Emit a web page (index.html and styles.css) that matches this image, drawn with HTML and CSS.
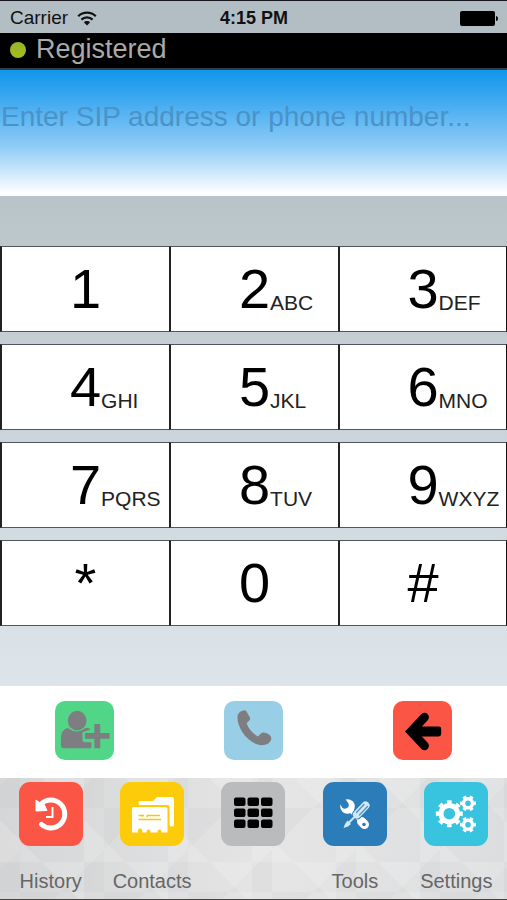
FILE: index.html
```html
<!DOCTYPE html>
<html lang="en">
<head>
<meta charset="utf-8">
<meta name="viewport" content="width=device-width, initial-scale=1">
<title>Dialer</title>
<link rel="stylesheet" href="styles.css">
</head>
<body>
<div class="phone">
  <header class="status-bar">
    <div class="carrier">
      <span>Carrier</span>
      <svg class="wifi" viewBox="0 0 20 15" aria-hidden="true">
        <path d="M1.2 5.200a12.600 12.600 0 0 1 17.600 0M4.400 8.600a8 8 0 0 1 11.200 0" fill="none" stroke="#111" stroke-width="2.200"/>
        <path d="M6.800 11.200a4.600 4.600 0 0 1 6.400 0L10 14.600z" fill="#111"/>
      </svg>
    </div>
    <span class="clock">4:15 PM</span>
    <svg class="battery" viewBox="0 0 38 15" aria-hidden="true">
      <rect width="35" height="15" rx="2"/>
      <path d="M36 5q2 0 2 2.500t-2 2.500z"/>
    </svg>
  </header>

  <div class="registration">
    <span class="led"></span>
    <span>Registered</span>
  </div>

  <main class="dialer">
    <input class="address" type="text" aria-label="SIP address or phone number" placeholder="Enter SIP address or phone number...">
    <div class="keypad">
      <button class="key"><span class="digit">1</span></button>
      <button class="key"><span class="digit">2</span><span class="letters">ABC</span></button>
      <button class="key"><span class="digit">3</span><span class="letters">DEF</span></button>
      <button class="key"><span class="digit">4</span><span class="letters">GHI</span></button>
      <button class="key"><span class="digit">5</span><span class="letters">JKL</span></button>
      <button class="key"><span class="digit">6</span><span class="letters">MNO</span></button>
      <button class="key"><span class="digit">7</span><span class="letters">PQRS</span></button>
      <button class="key"><span class="digit">8</span><span class="letters">TUV</span></button>
      <button class="key"><span class="digit">9</span><span class="letters">WXYZ</span></button>
      <button class="key"><span class="digit">*</span></button>
      <button class="key"><span class="digit">0</span></button>
      <button class="key"><span class="digit">#</span></button>
    </div>
    <div class="actions">
      <button class="action green" aria-label="Add contact">
        <svg viewBox="0 0 60 60" aria-hidden="true">
          <path fill="#7e7e82" d="M13 27.500q9 7 18 0q2 .5 4 2l-5 1.500q-3 1-2 3v6q0 2 3 2h6v6H9q-3 0-3-3v-6q0-10 7-11.500z"/>
          <ellipse cx="22.500" cy="20" rx="9.500" ry="10" fill="#7e7e82"/>
          <path d="M40 23.500h6v9h9.500v6H46V48h-6v-9.500h-9.500v-6H40z" fill="#7e7e82"/>
          <path d="M29 30q4-3 6.500-1" fill="none" stroke="#7e7e82" stroke-width="1.500"/>
        </svg>
      </button>
      <button class="action sky" aria-label="Call">
        <svg viewBox="0 0 60 60" aria-hidden="true">
          <path fill="#7e7e82" d="M14 14q2-4 7-4.500 1 0 2 1.500l3.500 6q.5 1.500-1 3l-2.500 2.500q3 8.500 11.500 13.500l3-3q2-1.500 5-.5 4.500 1.500 5.500 4.500.5 4-3.500 6.500-5 2.500-11 .5-9-3.500-15-12.500-6-10-4.500-17.500z"/>
        </svg>
      </button>
      <button class="action red" aria-label="Erase">
        <svg viewBox="0 0 60 60" aria-hidden="true">
          <path d="M32 16.500L18.500 31 32 45.500M20 31h15" fill="none" stroke="#000" stroke-width="9" stroke-linecap="round"/>
          <path d="M12.500 31L24 19l6 12-6 12z"/>
          <rect x="24" y="26" width="25" height="10" rx="2.500"/>
        </svg>
      </button>
    </div>
  </main>

  <nav class="tabs" aria-label="Sections">
    <a class="tab" href="#history">
      <svg class="tile red" viewBox="0 0 64 64" aria-hidden="true">
        <path d="M22.500 42.500A14 14 0 1 0 22 22" fill="none" stroke="#fff" stroke-width="5" stroke-linecap="round"/>
        <path d="M17 18l4 3 3-1 4 8.500-11 .5z" fill="#fff" stroke="#fff" stroke-linejoin="round"/>
        <path d="M33.500 25v10H27" fill="none" stroke="#fff" stroke-width="2"/>
      </svg>
      <span>History</span>
    </a>
    <a class="tab" href="#contacts">
      <svg class="tile yellow" viewBox="0 0 64 64" aria-hidden="true">
        <path fill="#fff" d="M20 19h13l3.500-3.500q.5-.5 1.500-.5h14q2 0 2 2v26q0 1.500-2 1.500t-2.500-1.500V25q0-2-2-2H20q-1.500 0-1.500-2t1.500-2z"/>
        <path fill="#fff" d="M13.500 25H45q2.500 0 2.500 2v23.500h-6q0-3-2-3t-2 3h-7q0-3-2-3t-2 3h-4q0-4-2.500-4t-2 4H12V27q0-2 1.500-2z"/>
        <path d="M18.500 33.500H24m2.500 0H40m-21.500 4H41" stroke="#f6c90e" stroke-width="1.500"/>
        <path d="M21 32.500l3 1-2 1.500zM28 32.500v2.500h-2z" fill="#f6c90e"/>
      </svg>
      <span>Contacts</span>
    </a>
    <a class="tab" href="#keypad" aria-label="Keypad" aria-current="page">
      <svg class="tile grey" viewBox="0 0 64 64" aria-hidden="true">
        <rect x="13" y="15.500" width="11.500" height="8.500" rx="2"/><rect x="26.500" y="15.500" width="11.500" height="8.500" rx="2"/><rect x="40" y="15.500" width="11.500" height="8.500" rx="2"/>
        <rect x="13" y="26.500" width="11.500" height="8.500" rx="2"/><rect x="26.500" y="26.500" width="11.500" height="8.500" rx="2"/><rect x="40" y="26.500" width="11.500" height="8.500" rx="2"/>
        <rect x="13" y="37.500" width="11.500" height="8.500" rx="2"/><rect x="26.500" y="37.500" width="11.500" height="8.500" rx="2"/><rect x="40" y="37.500" width="11.500" height="8.500" rx="2"/>
      </svg>
    </a>
    <a class="tab" href="#tools">
      <svg class="tile blue" viewBox="0 0 64 64" aria-hidden="true">
        <circle cx="24.500" cy="24.500" r="7.300" fill="#fff"/>
        <path d="M15 19l6-4 4.500 6.500q1 3-1.500 4.500t-4.500 0z" fill="#2a7db8"/>
        <path d="M28 28l13 14" stroke="#fff" stroke-width="5"/>
        <path d="M38.500 39.500l3 3" stroke="#fff" stroke-width="9" stroke-linecap="round"/>
        <circle cx="41" cy="42.500" r="1.800" fill="#2a7db8"/>
        <path d="M34 32.500L42.500 23.500" stroke="#2a7db8" stroke-width="10" stroke-linecap="round"/>
        <path d="M34 32.500L42.500 23.500" stroke="#d3e7f5" stroke-width="8" stroke-linecap="round"/>
        <path d="M33.500 30.500l7.500-8M36.500 33l8-8.500" stroke="#4b93c5" stroke-width="1.200" stroke-linecap="round"/>
        <path d="M32.500 34L25 41.500" stroke="#d3e7f5" stroke-width="2"/>
        <path d="M24.500 38.500l3.500 3.500-3 2.500-4.500 1.500 1.500-4z" fill="#d3e7f5"/>
      </svg>
      <span>Tools</span>
    </a>
    <a class="tab" href="#settings">
      <svg class="tile cyan" viewBox="0 0 64 64" aria-hidden="true">
        <g fill="none" stroke="#fff">
          <circle cx="25.300" cy="31.700" r="8.300" stroke-width="5"/>
          <circle cx="25.300" cy="31.700" r="11.700" stroke-width="3.600" pathLength="16" stroke-dasharray="1 1" stroke-dashoffset="0.500"/>
          <circle cx="44" cy="21.300" r="4.500" stroke-width="3.400"/>
          <circle cx="44" cy="21.300" r="6.600" stroke-width="2.800" pathLength="12" stroke-dasharray="1 1" stroke-dashoffset="0.500"/>
          <circle cx="44" cy="42.700" r="4.500" stroke-width="3.400"/>
          <circle cx="44" cy="42.700" r="6.600" stroke-width="2.800" pathLength="12" stroke-dasharray="1 1" stroke-dashoffset="0.500"/>
        </g>
      </svg>
      <span>Settings</span>
    </a>
  </nav>
</div>
</body>
</html>
```

FILE: styles.css
```css
* { box-sizing: border-box; }

body {
  margin: 0;
  font-family: "Liberation Sans", Arial, sans-serif;
}

button { font: inherit; padding: 0; cursor: pointer; }
svg { display: block; }

.phone {
  display: flex;
  flex-direction: column;
  min-height: 100vh;
  border-top: 1px solid #16161f;
  border-bottom: 1px solid #444;
}

.status-bar {
  display: grid;
  grid-template-columns: 1fr auto 1fr;
  align-items: center;
  height: 32px;
  padding: 2px 9px 0 10px;
  background: #b3bec4;
  color: #111;
  font-size: 19px;
}
.carrier { display: flex; align-items: center; gap: 9px; }
.wifi { width: 20px; height: 15px; }
.clock { font-size: 18px; font-weight: bold; }
.battery { width: 38px; height: 15px; justify-self: end; }

.registration {
  display: flex;
  align-items: center;
  gap: 10px;
  height: 37px;
  padding: 0 10px 2px;
  border-bottom: 2px solid #333d45;
  background: #000;
  color: #aaa;
  font-size: 27px;
}
.led {
  width: 16px;
  height: 16px;
  border-radius: 50%;
  background: linear-gradient(#93b62a, #a5bd20);
}

.dialer {
  flex: 1;
  display: flex;
  flex-direction: column;
  background: linear-gradient(#b9c4c9 126px, #dde5eb 616px);
}

.address {
  width: 100%;
  height: 126px;
  padding: 0 1px 32px;
  border: 0;
  outline: 0;
  background: linear-gradient(#1296ec, #37a6ef 20%, #8dcbf6 60%, #fff 98%);
  color: #1b3f5f;
  font: 28px "Liberation Sans", Arial, sans-serif;
}
.address::placeholder { color: #4a92c8; opacity: 1; }

.keypad {
  display: grid;
  grid-template-columns: repeat(3, 1fr);
  row-gap: 12px;
  margin: 50px 0 60px;
}
.key {
  display: grid;
  grid-template-columns: 1fr auto 1fr;
  align-items: center;
  height: 86px;
  border: 1px solid #50565c;
  border-width: 1px 0 1px 2px;
  border-left-color: #222;
  background: #fff;
  color: #000;
}
.key:nth-child(3n) { border-right: 1px solid #111; }
.digit { grid-column: 2; font-size: 56px; line-height: 84px; }
.letters {
  justify-self: start;
  padding-top: 28px;
  font-size: 21px;
  line-height: 24px;
  color: #222;
}

.actions {
  display: grid;
  grid-template-columns: repeat(3, 1fr);
  place-items: center;
  flex: 1;
  min-height: 92px;
  padding-bottom: 4px;
  background: #fff;
}
.action {
  width: 59px;
  height: 59px;
  border: 0;
  border-radius: 10px;
}

.tabs {
  display: grid;
  grid-template-columns: repeat(5, 1fr);
  height: 121px;
  padding-top: 4px;
  background:
    linear-gradient(45deg, #ffffff28 25%, transparent 25% 75%, #ffffff28 75%) 0 0 / 84px 84px,
    linear-gradient(135deg, #b8bcbe20 25%, transparent 25% 75%, #b8bcbe20 75%) 20px 30px / 84px 84px,
    linear-gradient(90deg, #d5d6d7, #e5e5e6 55%, #dcddde);
}
.tab {
  display: flex;
  flex-direction: column;
  align-items: center;
  gap: 24px;
  color: #666;
  font-size: 20px;
  line-height: 22px;
  text-decoration: none;
}
.tile { width: 64px; height: 64px; border-radius: 11px; }

.green { background: #51d688; }
.sky { background: #98cee6; }
.red { background: #fb5545; }
.yellow { background: #fccb0a; }
.grey { background: #babbbd; }
.blue { background: #2a7db8; }
.cyan { background: #38c3df; }
```
